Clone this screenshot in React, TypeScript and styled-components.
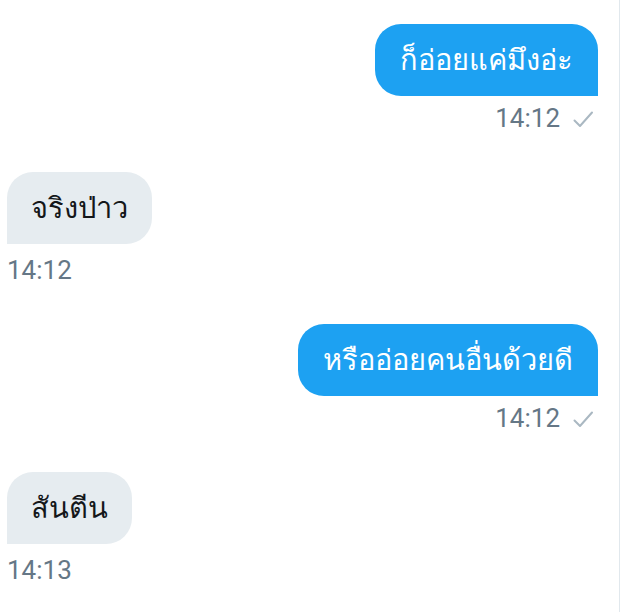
import React from "react";
import styled, { createGlobalStyle } from "styled-components";

const Global = createGlobalStyle`
  html, body { margin: 0; padding: 0; background: #ffffff; }
  body { font-family: Roboto, "Noto Sans", "DejaVu Sans", sans-serif; }
`;

const Screen = styled.div`
  width: 620px;
  height: 612px;
  border-right: 1px solid #e1e8ed;
  padding: 24px 21px 0 7px;
  box-sizing: border-box;
  display: flex;
  flex-direction: column;
  gap: 39px;
`;

const Group = styled.div<{ $mine: boolean }>`
  display: flex;
  flex-direction: column;
  align-items: ${(p) => (p.$mine ? "flex-end" : "flex-start")};
  gap: ${(p) => (p.$mine ? "7px" : "11px")};
`;

const Bubble = styled.div<{ $mine: boolean }>`
  height: 72px;
  box-sizing: border-box;
  padding: 0 ${(p) => (p.$mine ? "25px" : "24px")};
  display: flex;
  align-items: center;
  font-size: 29px;
  color: ${(p) => (p.$mine ? "#ffffff" : "#14171a")};
  background: ${(p) => (p.$mine ? "#1da1f2" : "#e6ecf0")};
  border-radius: ${(p) => (p.$mine ? "26px 26px 0 26px" : "26px 26px 26px 0")};
  white-space: nowrap;
`;

const Meta = styled.div`
  display: flex;
  align-items: center;
  gap: 12px;
  height: 30px;
  font-size: 26px;
  color: #657786;
`;

const Check = styled.svg`
  width: 22px;
  height: 22px;
  margin-right: 4px;
  margin-top: 4px;
`;

type Msg = { text: string; time: string; mine: boolean };

const messages: Msg[] = [
  { text: "ก็อ่อยแค่มึงอ่ะ", time: "14:12", mine: true },
  { text: "จริงป่าว", time: "14:12", mine: false },
  { text: "หรืออ่อยคนอื่นด้วยดี", time: "14:12", mine: true },
  { text: "สันตีน", time: "14:13", mine: false },
];

export default function App() {
  return (
    <>
      <Global />
      <Screen>
        {messages.map((m, i) => (
          <Group key={i} $mine={m.mine}>
            <Bubble $mine={m.mine}>{m.text}</Bubble>
            <Meta>
              <span>{m.time}</span>
              {m.mine && (
                <Check viewBox="0 0 22 22">
                  <path
                    d="M2.5 11.5 L8 17 L20 3.5"
                    fill="none"
                    stroke="#aab8c2"
                    strokeWidth="2"
                    strokeLinecap="round"
                    strokeLinejoin="round"
                  />
                </Check>
              )}
            </Meta>
          </Group>
        ))}
      </Screen>
    </>
  );
}
